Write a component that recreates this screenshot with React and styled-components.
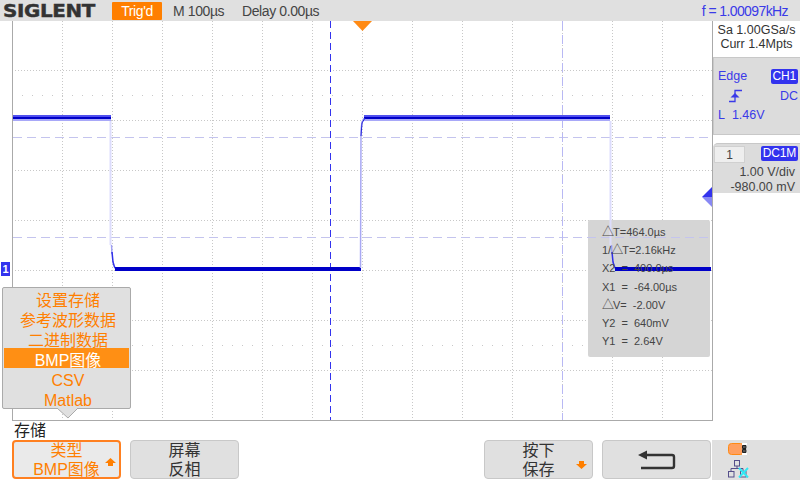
import styled, { createGlobalStyle } from 'styled-components'

const GlobalStyle = createGlobalStyle`
  html, body {
    margin: 0;
    padding: 0;
    background: #fff;
  }
  body {
    font-family: "Liberation Sans", "Noto Sans CJK SC", sans-serif;
  }
`

const Screen = styled.div`
  width: 800px;
  height: 480px;
  display: flex;
  flex-direction: column;
  overflow: hidden;
  background: #fff;
  color: #333;
`

const TopBar = styled.div`
  height: 21px;
  display: flex;
  align-items: center;
  background: #e0e0e0;
  font-size: 14px;
  letter-spacing: -0.4px;
  color: #444;
`

const LogoSlot = styled.div`
  width: 112px;
  padding-left: 3px;
  box-sizing: border-box;
`

const Logo = styled.div`
  font-family: "DejaVu Sans", sans-serif;
  font-size: 17px;
  font-weight: bold;
  letter-spacing: -0.3px;
  color: #333;
  transform: scaleX(1.17);
  transform-origin: left center;
  -webkit-text-stroke: 0.4px #333;
`

const TrigBadge = styled.div`
  width: 50px;
  height: 18px;
  line-height: 18px;
  margin-right: 11px;
  border-radius: 1px;
  text-align: center;
  color: #fff;
  background: #ff7f00;
`

const TimeLabel = styled.div`
  width: ${p => p.$w}px;
`

const Freq = styled.div`
  margin-left: auto;
  padding-right: 12px;
  letter-spacing: -0.6px;
  color: #3a3ae8;
`

const Middle = styled.div`
  height: 400px;
  display: flex;
  padding-left: 12px;
`

const Plot = styled.div`
  position: relative;
  width: 701px;
  height: 400px;
`

const GridLayer = styled.svg`
  display: block;
`

const TraceLayer = styled.svg`
  position: absolute;
  left: 0;
  top: 0;
  z-index: 2;
  pointer-events: none;
`

const ChannelMark = styled.div`
  position: absolute;
  left: -11px;
  top: 241px;
  z-index: 2;
  width: 9px;
  height: 14px;
  line-height: 14px;
  text-align: center;
  font-size: 11px;
  font-weight: bold;
  color: #fff;
  background: #3333ee;
`

const MeasurePanel = styled.div`
  position: absolute;
  left: 576px;
  top: 199px;
  width: 122px;
  height: 137px;
  box-sizing: border-box;
  padding: 3px 0 0 14px;
  background: #d5d5d5;
  border-radius: 2px;
`

const MeasureRow = styled.div`
  position: relative;
  z-index: 3;
  height: 18.2px;
  line-height: 18.2px;
  font-size: 11px;
  word-spacing: 3px;
  color: #444;
  white-space: nowrap;
`

const Delta = styled.span`
  font-size: 12px;
  letter-spacing: -2px;
  margin-right: 1px;
`

const Popup = styled.div`
  position: absolute;
  left: -10px;
  top: 266px;
  z-index: 4;
  width: 129px;
  height: 122px;
  box-sizing: border-box;
  background: #e0e0e0;
  border: 1px solid #aaa;
  border-radius: 2px;
`

const PopupArrow = styled.svg`
  position: absolute;
  left: 54px;
  top: 120px;
`

const PopupItem = styled.div`
  height: 20px;
  line-height: 25px;
  margin: 0 1px;
  padding-left: 3px;
  text-align: center;
  font-size: 16px;
  color: ${p => (p.$active ? '#fff' : '#ff7f00')};
  background: ${p => (p.$active ? '#ff8f14' : 'transparent')};
`

const SidePanel = styled.div`
  width: 87px;
  display: flex;
  flex-direction: column;
  font-size: 12.5px;
`

const Sample = styled.div`
  height: 36px;
  padding-top: 2px;
  box-sizing: border-box;
  text-align: center;
  line-height: 14px;
  font-size: 12.5px;
  color: #333;
`

const TriggerBox = styled.div`
  height: 78px;
  box-sizing: border-box;
  padding: 11px 2px 0 4px;
  background: #dcdcdc;
  border: 1px solid #c8c8c8;
  border-right: none;
  color: #3a3ae8;
  display: flex;
  flex-direction: column;
  gap: 4.5px;
`

const TriggerRow = styled.div`
  height: 15px;
  line-height: 15px;
  display: flex;
  align-items: center;
  justify-content: space-between;
`

const Chip = styled.span`
  padding: 0 2px;
  height: 15px;
  line-height: 15px;
  border-radius: 2px;
  color: #fff;
  background: #3333ee;
  font-size: 12px;
  letter-spacing: -0.2px;
`

const ChannelBox = styled.div`
  margin-top: 8px;
  height: 50px;
  box-sizing: border-box;
  background: #dcdcdc;
  border-top: 1px solid #c8c8c8;
  border-radius: 5px 0 0 0;
  color: #444;
`

const ChannelTabs = styled.div`
  height: 19px;
  padding: 2px 2px 0 1px;
  display: flex;
  justify-content: space-between;
`

const ChannelTab = styled.div`
  width: 31px;
  height: 17px;
  line-height: 17px;
  text-align: center;
  font-size: 12px;
  background: #eee;
  border: 1px solid #d0d0d0;
  box-sizing: border-box;
`

const ChannelValue = styled.div`
  height: 15px;
  line-height: 15px;
  padding-right: 5px;
  text-align: right;
  font-size: 12.5px;
`

const AxisLabel = styled.div`
  height: 19px;
  line-height: 20px;
  padding-left: 14px;
  font-size: 16px;
  color: #222;
`

const BottomBar = styled.div`
  height: 40px;
  display: flex;
  padding-left: 12px;
  gap: 9px;
`

const SoftKey = styled.div`
  position: relative;
  width: 109px;
  height: 39px;
  box-sizing: border-box;
  margin-left: ${p => p.$gap || 0}px;
  display: flex;
  flex-direction: column;
  align-items: center;
  justify-content: center;
  line-height: 19px;
  font-size: 16px;
  border-radius: 4px;
  background: ${p => (p.$active ? '#eaeaea' : '#e0e0e0')};
  border: ${p => (p.$active ? '2px solid #ff8020' : '1px solid #c8c8c8')};
  color: ${p => (p.$active ? '#ff7f00' : '#333')};
`

const KeyMark = styled.svg`
  position: absolute;
  right: ${p => p.$r}px;
  top: ${p => p.$t}px;
`

const StatusArea = styled.div`
  margin-left: -8px;
  flex: 1;
  background: #e0e0e0;
  display: flex;
  flex-direction: column;
  padding: 3px 0 0 16px;
  gap: 5px;
`

const verticals = [62, 112, 162, 212, 262, 312, 362, 412, 462, 512, 562, 612, 662]
const horizontals = [70, 120, 170, 220, 270, 320, 370]

const measures = [
  <><Delta>△</Delta>T=464.0µs</>,
  <>1/<Delta>△</Delta>T=2.16kHz</>,
  <>X2 = 400.0µs</>,
  <>X1 = -64.00µs</>,
  <><Delta>△</Delta>V= -2.00V</>,
  <>Y2 = 640mV</>,
  <>Y1 = 2.64V</>,
]

const menuItems = ['设置存储', '参考波形数据', '二进制数据', 'BMP图像', 'CSV', 'Matlab']

function Grid() {
  return (
    <GridLayer width="701" height="400" viewBox="12 21 701 400">
      {verticals.map(x => (
        <line key={x} x1={x + 0.5} y1="21" x2={x + 0.5} y2="420" stroke="#c8c8c8" strokeDasharray="1 2" />
      ))}
      {horizontals.map(y => (
        <line key={y} x1="12" y1={y + 0.5} x2="712" y2={y + 0.5} stroke="#c8c8c8" strokeDasharray="1 2" />
      ))}
      {[95, 345].map(y => (
        <line key={y} x1="22" y1={y + 0.5} x2="712" y2={y + 0.5} stroke="#c8c8c8" strokeDasharray="1 9" />
      ))}
      <line x1="12.5" y1="21" x2="12.5" y2="421" stroke="#aaa" />
      <line x1="712.5" y1="21" x2="712.5" y2="421" stroke="#aaa" />
      <line x1="12" y1="420.5" x2="713" y2="420.5" stroke="#aaa" />
    </GridLayer>
  )
}

function HighLevel({ x, width }) {
  return (
    <>
      <rect x={x} y="115" width={width} height="2" fill="#5050ee" />
      <rect x={x} y="117" width={width} height="2" fill="#0000c8" />
      <rect x={x} y="119" width={width} height="2" fill="#a8a8f8" />
    </>
  )
}

function Traces() {
  return (
    <TraceLayer width="701" height="400" viewBox="12 21 701 400">
      {/* cursors */}
      <line x1="13" y1="137.5" x2="712" y2="137.5" stroke="#c4c4ee" strokeDasharray="9 5" />
      <line x1="13" y1="237.5" x2="712" y2="237.5" stroke="#c4c4ee" strokeDasharray="9 5" />
      <line x1="562.5" y1="21" x2="562.5" y2="420" stroke="#b8b8f4" strokeDasharray="9 5" />
      <line x1="330.5" y1="21" x2="330.5" y2="420" stroke="#3333ee" strokeDasharray="7 4" />
      {/* waveform */}
      <HighLevel x={13} width={98} />
      <HighLevel x={364} width={246} />
      <line x1="110.5" y1="121" x2="110.5" y2="245" stroke="#dcdcfc" strokeWidth="2" />
      <path d="M111.5 245 L112 254" stroke="#a0a0f4" strokeWidth="1.5" fill="none" />
      <path d="M112 252 L113 262 L114.5 267 L116 269" stroke="#3030e8" strokeWidth="1.5" fill="none" />
      <rect x="115" y="267" width="246" height="4" fill="#0000c8" />
      <path d="M360.5 268 L361 130 L362 122 L364 118" stroke="#a8a8f4" strokeWidth="1.5" fill="none" />
      <path d="M361 136 L362 123 L365 118" stroke="#2222dd" strokeWidth="1" fill="none" />
      <line x1="610.5" y1="121" x2="610.5" y2="245" stroke="#dcdcfc" strokeWidth="2" />
      <path d="M611.5 245 L612 254" stroke="#a0a0f4" strokeWidth="1.5" fill="none" />
      <path d="M612 252 L613 262 L614.5 267 L616 269" stroke="#3030e8" strokeWidth="1.5" fill="none" />
      <rect x="615" y="267" width="96" height="4" fill="#0000c8" />
      {/* trigger position */}
      <path d="M353 21 H372 L362.5 31 Z" fill="#ff8a14" />
      {/* trigger level */}
      <path d="M712 187 V197 H702 Z" fill="#3333ee" />
      <path d="M712 197 V207 L702 197 Z" fill="#8888f4" />
      {/* channel arrow */}
      <path d="M10 263 L12 269 L10 275 Z" fill="#3333ee" />
    </TraceLayer>
  )
}

function App() {
  return (
    <Screen>
      <GlobalStyle />
      <TopBar>
        <LogoSlot>
          <Logo>SIGLENT</Logo>
        </LogoSlot>
        <TrigBadge>Trig'd</TrigBadge>
        <TimeLabel $w={69}>M 100µs</TimeLabel>
        <TimeLabel $w={100}>Delay 0.00µs</TimeLabel>
        <Freq>f = 1.00097kHz</Freq>
      </TopBar>

      <Middle>
        <Plot>
          <Grid />
          <MeasurePanel>
            {measures.map((row, i) => (
              <MeasureRow key={i}>{row}</MeasureRow>
            ))}
          </MeasurePanel>
          <Traces />
          <ChannelMark>1</ChannelMark>
          <Popup>
            {menuItems.map(item => (
              <PopupItem key={item} $active={item === 'BMP图像'}>
                {item}
              </PopupItem>
            ))}
            <PopupArrow width="22" height="11" viewBox="0 0 22 11">
              <path d="M0 0 L11 10 L21 0" fill="#e0e0e0" stroke="#aaa" />
            </PopupArrow>
          </Popup>
        </Plot>

        <SidePanel>
          <Sample>
            Sa 1.00GSa/s
            <br />
            Curr 1.4Mpts
          </Sample>
          <TriggerBox>
            <TriggerRow>
              Edge <Chip>CH1</Chip>
            </TriggerRow>
            <TriggerRow>
              <svg width="38" height="14" viewBox="0 0 38 14">
                <path d="M11 12.5 H17 V1.5 H24" fill="none" stroke="#3a3ae8" strokeWidth="1.3" />
                <path d="M12.5 8.5 L17 4 L21.5 8.5 Z" fill="#3a3ae8" />
              </svg>
              DC
            </TriggerRow>
            <TriggerRow>L&nbsp;&nbsp;1.46V<span /></TriggerRow>
          </TriggerBox>
          <ChannelBox>
            <ChannelTabs>
              <ChannelTab>1</ChannelTab>
              <Chip>DC1M</Chip>
            </ChannelTabs>
            <ChannelValue>1.00 V/div</ChannelValue>
            <ChannelValue>-980.00 mV</ChannelValue>
          </ChannelBox>
        </SidePanel>
      </Middle>

      <AxisLabel>存储</AxisLabel>
      <BottomBar>
        <SoftKey $active>
          <span>类型</span>
          <span>BMP图像</span>
          <KeyMark $r={3} $t={16} width="11" height="8" viewBox="0 0 11 8">
            <path d="M5.5 0 L11 5 H8 V8 H3 V5 H0 Z" fill="#ff7f00" />
          </KeyMark>
        </SoftKey>
        <SoftKey>
          <span>屏幕</span>
          <span>反相</span>
        </SoftKey>
        <SoftKey $gap={236}>
          <span>按下</span>
          <span>保存</span>
          <KeyMark $r={5} $t={20} width="11" height="8" viewBox="0 0 11 8">
            <path d="M5.5 8 L11 3 H8 V0 H3 V3 H0 Z" fill="#ff7f00" />
          </KeyMark>
        </SoftKey>
        <SoftKey>
          <svg width="38" height="20" viewBox="0 0 38 20">
            <path d="M9 5 H34 Q36 5 36 7 V16 Q36 18 34 18 H3" fill="none" stroke="#333" strokeWidth="2.4" />
            <path d="M0 5 L9 0.5 V9.5 Z" fill="#333" />
          </svg>
        </SoftKey>
        <StatusArea>
          <svg width="19" height="12" viewBox="0 0 19 12">
            <rect x="0.5" y="0.5" width="15" height="11" rx="3" fill="#ffa060" stroke="#ff8a14" />
            <rect x="14" y="0" width="5" height="12" fill="#fff" />
            <path d="M14.5 2.5 H18 V5.5 H14.5 Z M14.5 6.5 H18 V9.5 H14.5 Z" fill="#555" stroke="#222" />
          </svg>
          <svg width="21" height="18" viewBox="0 0 21 18">
            <path d="M9 6 V8.5 M3 11.5 V8.5 H15 V11.5" fill="none" stroke="#554e8a" />
            <rect x="6.5" y="0.5" width="5" height="5.5" fill="#e0e0e0" stroke="#554e8a" />
            <rect x="0.5" y="11.5" width="5.5" height="5.5" fill="#e0e0e0" stroke="#554e8a" />
            <rect x="12.5" y="11.5" width="5.5" height="5.5" fill="#e0e0e0" stroke="#554e8a" />
            <path d="M11 8 L20 17.5 M20 8 L11 17.5" stroke="#33e8f4" strokeWidth="2" />
          </svg>
        </StatusArea>
      </BottomBar>
    </Screen>
  )
}

export default App
